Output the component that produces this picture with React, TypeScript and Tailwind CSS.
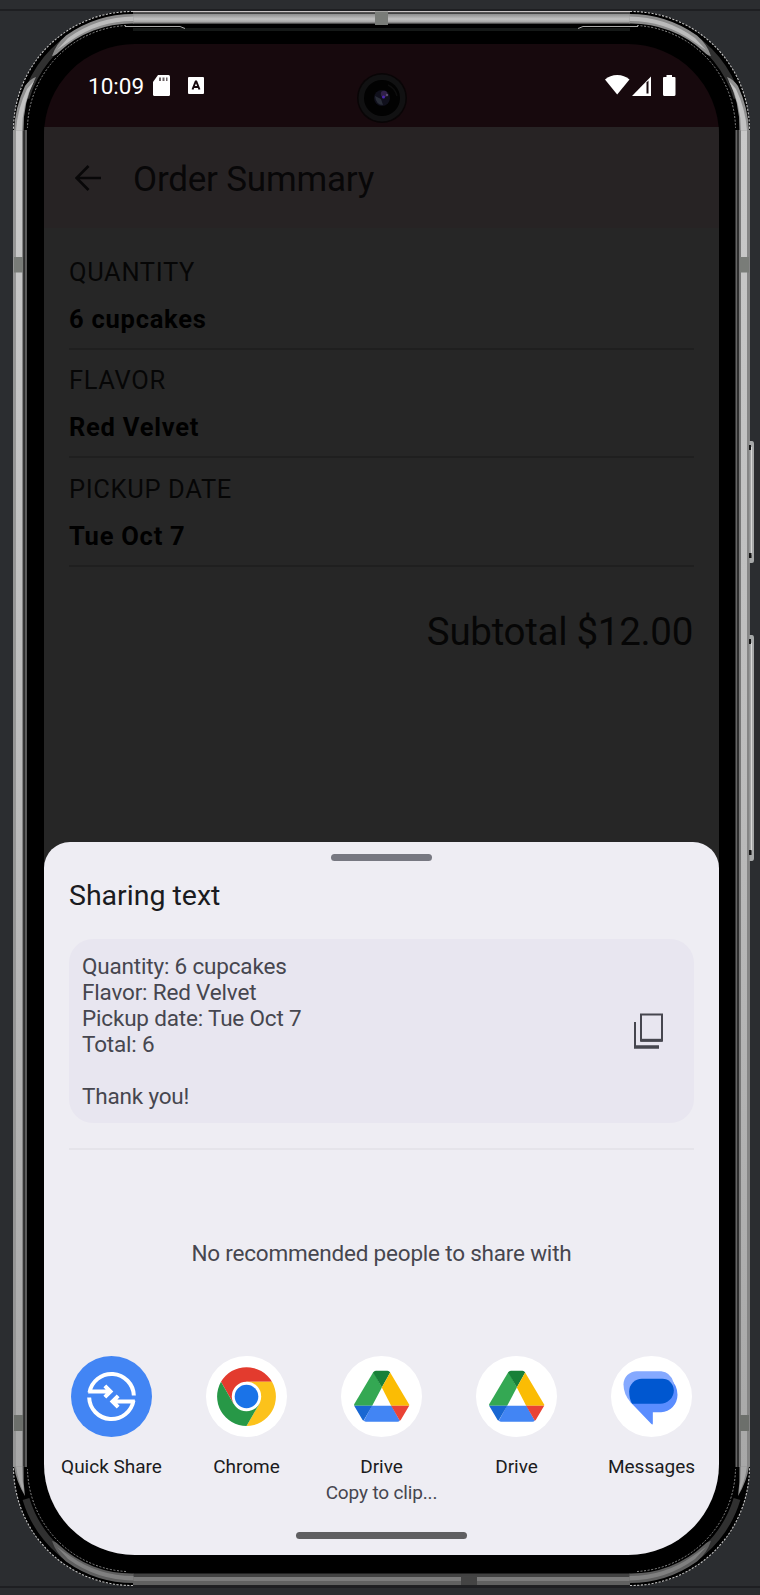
import React from 'react';

const orderRows = [
  { label: 'QUANTITY', value: '6 cupcakes' },
  { label: 'FLAVOR', value: 'Red Velvet' },
  { label: 'PICKUP DATE', value: 'Tue Oct 7' },
];

// Metal shell, corner reflections, antenna bands and side keys of the device.
function DeviceShell() {
  const corners = [
    { t: 'translate(0 0)', top: true },
    { t: 'translate(763 0) scale(-1 1)', top: true },
    { t: 'translate(0 1597) scale(1 -1)', top: false },
    { t: 'translate(763 1597) scale(-1 -1)', top: false },
  ];
  return (
    <svg className="pointer-events-none absolute inset-0" width="760" height="1595" viewBox="0 0 760 1595" fill="none">
      <defs>
        <linearGradient id="side" x1="0" y1="128" x2="0" y2="1470" gradientUnits="userSpaceOnUse">
          <stop offset="0" stopColor="#c9c9c9" />
          <stop offset="0.45" stopColor="#bdbdbd" />
          <stop offset="1" stopColor="#a8a8a8" />
        </linearGradient>
        <linearGradient id="topMetal" x1="0" y1="14" x2="0" y2="24" gradientUnits="userSpaceOnUse">
          <stop offset="0" stopColor="#8d8d8d" />
          <stop offset="0.5" stopColor="#c2c2c2" />
          <stop offset="0.8" stopColor="#a5a5a5" />
          <stop offset="1" stopColor="#333" />
        </linearGradient>
      </defs>
      <rect x="13" y="11" width="737" height="1575" rx="119.500" fill="#000" />
      {/* left rail */}
      <path fill="#959595" d="M13 130h3v1337h-3z" />
      <path fill="url(#side)" d="M16 130h6v1337h-6z" />
      <path fill="#858585" d="M22 130h1.500v1337H22z" />
      <path fill="#2c2c2c" d="M23.500 130h1.500v1337h-1.500z" />
      <path fill="#5c5c5c" d="M25 130h2v1337h-2z" />
      {/* right rail */}
      <path fill="#666" d="M735.500 130h1.500v1337h-1.500z" />
      <path fill="#303030" d="M737 130h2v1337h-2z" />
      <path fill="#777" d="M739 130h2v1337h-2z" />
      <path fill="url(#side)" d="M741 130h6v1337h-6z" />
      <path fill="#858585" d="M747 130h3v1337h-3z" />
      {/* top rail */}
      <path fill="#c9c4c4" d="M133 11h497v1.500H133z" />
      <path fill="#444" d="M133 12.500h497v1.500H133z" />
      <path fill="url(#topMetal)" d="M133 14h497v10H133z" />
      <path fill="#151817" d="M133 28h497v3H133z" />
      {/* bottom rail */}
      <path fill="#424242" d="M133 1573.500h497v3.500H133z" />
      <path fill="#7b7b7b" d="M133 1577h497v4H133z" />
      <path fill="#616161" d="M133 1581h497v4H133z" />
      <path fill="#202123" d="M133 1585h497v1.500H133z" />
      {corners.map(({ t, top }) => (
        <g key={t} transform={t}>
          <path stroke="#303030" strokeWidth="7" d="M80 31.500A112 112 0 0 0 26 98" />
          <path stroke="#c4c4c4" strokeWidth="1.100" strokeDasharray="2.200 1.400" d="M133 11.500A118.500 118.500 0 0 0 13.500 130" />
          <path stroke="#8a8a8a" strokeWidth="1" strokeDasharray="2 1.600" d="M126 25.500A104.500 104.500 0 0 0 27.500 128" />
          <path fill={top ? '#8c8c8c' : '#5f5f5f'} d="M133.500 14A116 116 0 0 0 66 35.500Q56 44 52 56Q55 56 59 52A107 107 0 0 1 133.500 23.500Z" />
          <path fill={top ? '#bbb' : '#808080'} d="M133.500 16.500A113.500 113.500 0 0 0 68 38L57 50L70 41A110 110 0 0 1 133.500 21Z" />
          {top ? (
            <>
              <path fill="#8f8f8f" d="M14 130.500A117 117 0 0 1 25 86Q30 79 36 77A110 110 0 0 0 23.500 130.500Z" />
              <path fill="#c2c2c2" d="M16 130.500A114 114 0 0 1 27 89L34 81A108 108 0 0 0 22 130.500Z" />
            </>
          ) : (
            <>
              <path fill="#858585" d="M14 130.500Q16 116 25 101Q23 115 23.500 130.500Z" />
              <path fill="#a8a8a8" d="M16 130.500Q18 116 24 104Q22 117 22 130.500Z" />
            </>
          )}
        </g>
      ))}
      <path stroke="#aaa" strokeWidth="1" d="M125 26.500H180L185 28.500M638 26.500H583L578 28.500" />
      {/* antenna bands */}
      <path fill="#797c78" d="M375 11.500h13V25h-13zM14 257h9v15.500h-9zM740 257h9v15.500h-9z" />
      <path fill="#6c6f6b" d="M14 1415h9v16h-9zM740 1415h9v16h-9z" />
      <path fill="#444" d="M461 1576h16v9h-16z" />
      {/* side keys */}
      <path fill="#a6a8a8" d="M749.500 441H752q2 0 2 3v117q0 2-2 2h-2.500zM749.500 635H752q2 0 2 3v220q0 3-2 3h-2.500z" />
      <path fill="#d8d8d8" d="M751 447h1v108h-1zM751 643h1v208h-1z" />
      <path fill="#151515" d="M749 445h2v5h-2zM749 553h2.500v5H749zM749 639h2v5h-2zM749 850h2.500v5H749z" />
    </svg>
  );
}

function StatusBar() {
  return (
    <div className="flex h-[83px] shrink-0 bg-[#17090d] pl-[44px] pr-[43px] pt-[28px]">
      <span className="w-[65px] text-[22.5px] leading-[28px] text-white">10:09</span>
      <svg className="mt-[3px] h-[21px] w-[17px]" viewBox="0 0 17 21">
        <path fill="#fff" d="M5 0H15.500Q17 0 17 1.500V19.500Q17 21 15.500 21H1.500Q0 21 0 19.500V7Z" />
        <path fill="#6b6265" d="M6 2.500h2V6H6zM9.500 2.500h2V6h-2zM13 2.500h1.500V6H13z" />
      </svg>
      <svg className="ml-[18px] mt-[5px] h-[17px] w-[16px]" viewBox="0 0 16 17">
        <rect width="16" height="17" rx="1" fill="#fff" />
        <path fill="none" stroke="#17090d" strokeWidth="2" d="M4.500 12.500L7.700 4.500H8.300L11.500 12.500M5.500 10H10.500" />
      </svg>
      <div className="flex-1" />
      <svg className="mt-[3px] h-[21px] w-[71px]" viewBox="0 0 71 21">
        <path fill="#fff" d="M0 4.500Q5 0 12.200 0T24.500 4.500L12.200 19.500Z" />
        <path fill="#fff" d="M27 21L46 1.500V21Z" />
        <path fill="#17090d" d="M41.500 7.500L43.500 5.500V18.500H41.500Z" />
        <path fill="#fff" d="M58 3Q58 2 59 2H61.500V0H67V2H69.500Q70.500 2 70.500 3V19.500Q70.500 21 69 21H59.500Q58 21 58 19.500Z" />
      </svg>
    </div>
  );
}

function OrderSummary() {
  return (
    <div className="flex h-[715px] shrink-0 flex-col bg-[#262626] text-[#060606]">
      <div className="flex h-[101px] shrink-0 items-center bg-[#272324] pl-[31px]">
        <svg className="h-[26px] w-[26px]" viewBox="0 0 26 26" fill="none" stroke="#080708" strokeWidth="2.600">
          <path d="M26 13H2M13.500 1L1.500 13L13.500 25" />
        </svg>
        <h1 className="ml-[32px] pt-[4px] text-[35px] leading-[44px] tracking-[-0.2px] text-[#080708]">Order Summary</h1>
      </div>
      <div className="mt-[13px] px-[25px]">
        {orderRows.map((row) => (
          <div key={row.label} className="h-[108.5px] border-b-2 border-[#1f1f1f] pt-[13.5px]">
            <p className="text-[25.5px] leading-[34px] tracking-[0.65px]">{row.label}</p>
            <p className="mt-[13px] text-[25.5px] font-bold leading-[34px] tracking-[0.75px] text-black">{row.value}</p>
          </div>
        ))}
        <p className="mt-[41px] pr-px text-right text-[38.5px] leading-[48px] tracking-[-0.3px]">Subtotal $12.00</p>
      </div>
    </div>
  );
}

function QuickShareIcon() {
  return (
    <svg className="h-[81px] w-[81px]" viewBox="212.5 48.5 243 243" fill="none">
      <circle cx="334" cy="170" r="121.500" fill="#4285f4" />
      <g stroke="#fff" strokeWidth="12">
        <path d="M264 155H331M268 158A67 67 0 0 1 401 167M314 138L331 155L314 172" />
        <path d="M404 185H337M400 182A67 67 0 0 1 267 173M354 168L337 185L354 202" />
      </g>
    </svg>
  );
}

function ChromeIcon() {
  return (
    <svg className="h-[81px] w-[81px]" viewBox="-40.5 -40.5 81 81">
      <circle r="40.500" fill="#fff" />
      <path fill="#e33b2e" d="M-25.500 -14.700A29.500 29.500 0 0 1 25.500 -14.700H0L-12.800 7.400Z" />
      <path fill="#fcc21b" d="M25.500 -14.700A29.500 29.500 0 0 1 0 29.500L12.800 7.400L0 -14.700Z" />
      <path fill="#279847" d="M0 29.500A29.500 29.500 0 0 1 -25.500 -14.700L-12.800 7.400H12.800Z" />
      <circle r="14.700" fill="#fff" />
      <circle r="11.800" fill="#1a73e8" />
    </svg>
  );
}

function DriveIcon() {
  return (
    <svg className="h-[81px] w-[81px]" viewBox="152.5 48.5 243 243">
      <circle cx="274" cy="170" r="121.500" fill="#fff" />
      <path fill="#34a853" d="M250 96L192 193V198H246L275 143Z" />
      <path fill="#188038" d="M249 98Q252 93 257 93H292Q297 93 300 98L275 143Z" />
      <path fill="#fbbc04" d="M300 98L357 194V198H303L275 143Z" />
      <path fill="#4285f4" d="M245 198H304L329 243Q326 246 322 246H228Q224 246 221 243Z" />
      <path fill="#1967d2" d="M192 198H246L220 243Q217 241 215 237Z" />
      <path fill="#ea4335" d="M303 198H357L334 237Q332 241 329 243Z" />
    </svg>
  );
}

function MessagesIcon() {
  return (
    <svg className="h-[81px] w-[81px]" viewBox="333.5 48.5 243 243">
      <circle cx="455" cy="170" r="121.500" fill="#fff" />
      <path fill="#5a8dff" d="M385 160L392 187L454 252Q459 257 459 250V217H484A49 52 0 0 0 533 165Q533 136 512 118Z" />
      <path fill="#85a9ff" d="M411 94H484Q511 96 521 127V150L392 187Q371 163 371 134A40 40 0 0 1 411 94Z" />
      <path fill="#0057d0" d="M426 117H488A34 34 0 0 1 522 151A41 41 0 0 1 481 192H397Q388 178 388 155A38 38 0 0 1 426 117Z" />
    </svg>
  );
}

const apps = [
  { name: 'Quick Share', Icon: QuickShareIcon },
  { name: 'Chrome', Icon: ChromeIcon },
  { name: 'Drive', Icon: DriveIcon, detail: 'Copy to clip...' },
  { name: 'Drive', Icon: DriveIcon },
  { name: 'Messages', Icon: MessagesIcon },
];

function ShareSheet() {
  return (
    <div className="bg-[#262626]">
      <div className="flex h-[713px] flex-col rounded-t-[26px] bg-[#eeedf3]">
        <div className="mx-auto mt-[12px] h-[7px] w-[101px] shrink-0 rounded-full bg-[#777881]" />
        <h2 className="mt-[17px] pl-[25px] text-[28.5px] leading-[36px] text-[#1a1b20]">Sharing text</h2>
        <div className="mx-[25px] mt-[25px] flex h-[184px] shrink-0 items-center justify-between rounded-[24px] bg-[#e8e6f0] pl-[13px] pr-[31px]">
          <p className="whitespace-pre-line pt-[2px] text-[22.5px] leading-[25.900px] tracking-[-0.18px] text-[#46464f]">
            {'Quantity: 6 cupcakes\nFlavor: Red Velvet\nPickup date: Tue Oct 7\nTotal: 6\n\nThank you!'}
          </p>
          <svg className="h-[36px] w-[29px]" viewBox="0 0 29 36" fill="none" stroke="#46464f">
            <path strokeWidth="2" d="M7 1.500H28V27.500H7Z" />
            <path strokeWidth="3" d="M6.500 27.300H28.500" />
            <path strokeWidth="2" d="M1 9V34" />
            <path strokeWidth="3.500" d="M0 34H25" />
          </svg>
        </div>
        <div className="mx-[25px] mt-[25px] h-[2px] shrink-0 bg-[#e5e4ea]" />
        <p className="mt-[89px] text-center text-[22.5px] leading-[28px] tracking-[-0.2px] text-[#46464f]">No recommended people to share with</p>
        <div className="mt-[89px] grid grid-cols-5">
          {apps.map(({ name, Icon, detail }, i) => (
            <div key={i} className="flex flex-col items-center">
              <Icon />
              <span className="mt-[17px] whitespace-nowrap text-[19px] leading-[26px] text-[#1a1b20]">{name}</span>
              {detail && <span className="whitespace-nowrap text-[19px] leading-[26px] tracking-[-0.15px] text-[#46464f]">{detail}</span>}
            </div>
          ))}
        </div>
        <div className="mx-auto mb-[16px] mt-auto h-[7px] w-[171px] shrink-0 rounded-full bg-[#5f5f61]" />
      </div>
    </div>
  );
}

export default function App() {
  return (
    <main className="relative h-[1595px] w-[760px] overflow-hidden bg-[#2b2d30] pl-[44px] pt-[44px] font-['Roboto',sans-serif]">
      <div className="absolute inset-x-0 top-[9px] h-[2px] bg-[#1e1f22]" />
      <div className="absolute inset-x-0 top-[1586px] h-[2px] bg-[#1e1f22]" />
      <DeviceShell />
      <div className="relative flex h-[1511px] w-[675px] flex-col overflow-hidden rounded-[91px]">
        <StatusBar />
        <OrderSummary />
        <ShareSheet />
        <svg className="absolute left-[312px] top-[28px] h-[52px] w-[52px]" viewBox="-26 -26 52 52">
          <circle r="25" fill="#090506" />
          <circle r="23.500" fill="#111112" />
          <circle r="18" fill="#020202" />
          <path fill="none" stroke="#0d0d0d" strokeWidth="1.500" d="M6 -13Q13 -10 15 -2" />
          <circle r="8" fill="#10101c" />
          <path fill="#292d38" d="M-7 -2Q-6 7 1 7L-1 1Z" />
          <circle cx="2" cy="-4" r="3.200" fill="#302048" />
          <circle cx="1.500" cy="-1" r="1.500" fill="#4a25b0" />
          <circle cx="5" cy="-3" r="1.200" fill="#594b6c" />
        </svg>
      </div>
    </main>
  );
}
